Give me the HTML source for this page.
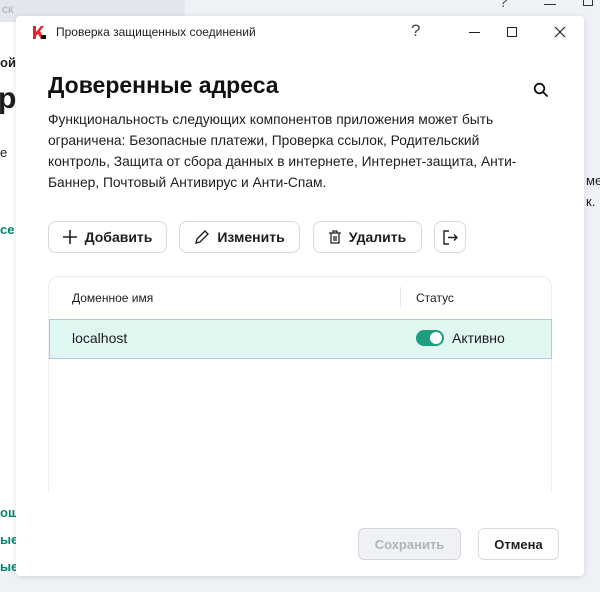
<!DOCTYPE html>
<html><head><meta charset="utf-8"><style>
*{box-sizing:border-box;margin:0;padding:0}
body{width:600px;height:592px;overflow:hidden;background:#eef1f5;font-family:"Liberation Sans","Noto Sans CJK JP",sans-serif;color:#1d1d1f;position:relative}
.abs{position:absolute;white-space:nowrap}
.dlg{position:absolute;left:16px;top:16px;width:568px;height:560px;background:#fff;border-radius:4px;box-shadow:0 1px 6px rgba(0,0,0,.12)}
.btn{position:absolute;top:205px;height:32px;border:1px solid #d6d9de;border-radius:8px;background:#fff;font-weight:bold;font-size:14px;display:flex;align-items:center;justify-content:center;gap:8px}
</style></head><body>
<div class="abs" style="left:0;top:0;width:185px;height:22px;background:#e3e7ed"></div>
<div class="abs" style="left:0;top:22px;width:16px;height:545px;background:#fff"></div>
<div class="abs" style="left:2px;top:2px;font-size:12px;color:#aab">ск</div>
<div class="abs" style="left:0;top:55px;font-size:13px;font-weight:bold">ой</div>
<div class="abs" style="left:-2px;top:82px;font-size:30px;font-weight:bold">р</div>
<div class="abs" style="left:0;top:145px;font-size:13px">е</div>
<div class="abs" style="left:0;top:222px;font-size:13px;color:#00866c;font-weight:bold">се</div>
<div class="abs" style="left:0;top:505px;font-size:13px;color:#00866c;font-weight:bold">ош</div>
<div class="abs" style="left:0;top:532px;font-size:13px;color:#00866c;font-weight:bold">ые</div>
<div class="abs" style="left:0;top:559px;font-size:13px;color:#00866c;font-weight:bold">ые</div>
<div class="abs" style="left:499px;top:-6px;font-size:16px;color:#555">?</div>
<div class="abs" style="left:544px;top:4px;width:12px;height:1px;background:#333"></div>
<div class="abs" style="left:583px;top:-4px;width:10px;height:10px;border:1px solid #333"></div>
<div class="abs" style="left:586px;top:173px;font-size:13px">ме</div>
<div class="abs" style="left:586px;top:194px;font-size:13px">к.</div>
<div class="dlg">
 <svg class="abs" style="left:16px;top:9px" width="15" height="15" viewBox="0 0 15 15"><path d="M1 1h3v6l5-6h3l-4 5 4 8H9L6 9 4 11v3H1z" fill="#e8232a"/><path d="M9 10l5 0 0 4-5 0z" fill="#111"/></svg>
 <div class="abs" style="left:40px;top:9px;font-size:12px">Проверка защищенных соединений</div>
 <div class="abs" style="left:395px;top:5px;font-size:17px;color:#444">?</div>
 <div class="abs" style="left:453px;top:16px;width:11px;height:1px;background:#222"></div>
 <div class="abs" style="left:491px;top:11px;width:10px;height:10px;border:1px solid #222"></div>
 <svg class="abs" style="left:538px;top:10px" width="12" height="12"><path d="M1 1L11 11M11 1L1 11" stroke="#222" stroke-width="1.2"/></svg>
 <div class="abs" style="left:32px;top:56px;font-size:23px;font-weight:bold;color:#111">Доверенные адреса</div>
 <svg class="abs" style="left:517px;top:66px" width="16" height="16"><circle cx="6.5" cy="6.5" r="4.8" fill="none" stroke="#111" stroke-width="1.8"/><path d="M10 10l4.5 4.5" stroke="#111" stroke-width="1.8"/></svg>
 <div class="abs" style="left:32px;top:93px;font-size:13.8px;line-height:21px;white-space:normal;width:478px">Функциональность следующих компонентов приложения может быть ограничена: Безопасные платежи, Проверка ссылок, Родительский контроль, Защита от сбора данных в интернете, Интернет-защита, Анти-Баннер, Почтовый Антивирус и Анти-Спам.</div>
 <div class="btn" style="left:32px;width:119px"><svg width="14" height="14"><path d="M7 0v14M0 7h14" stroke="#222" stroke-width="1.6"/></svg>Добавить</div>
 <div class="btn" style="left:163px;width:121px"><svg width="15" height="15"><path d="M2 13l1-4 8-8 3 3-8 8z" fill="none" stroke="#222" stroke-width="1.4"/></svg>Изменить</div>
 <div class="btn" style="left:297px;width:109px"><svg width="12" height="14"><path d="M0 3h12M4 3V1h4v2M2 3v10h8V3M5 6v5M7 6v5" fill="none" stroke="#222" stroke-width="1.3"/></svg>Удалить</div>
 <div class="btn" style="left:418px;width:32px"><svg width="15" height="15"><path d="M6 1H1v13h5M5 7.5h9M11 4.5l3 3-3 3" fill="none" stroke="#222" stroke-width="1.4"/></svg></div>
 <div class="abs" style="left:32px;top:260px;width:504px;height:216px;border:1px solid #eceef1;border-bottom:none;border-radius:10px 10px 0 0"></div>
 <div class="abs" style="left:56px;top:275px;font-size:12px">Доменное имя</div>
 <div class="abs" style="left:384px;top:271px;width:1px;height:20px;background:#e4e6ea"></div>
 <div class="abs" style="left:400px;top:275px;font-size:12px">Статус</div>
 <div class="abs" style="left:33px;top:303px;width:503px;height:40px;background:#dff6f1;border:1px solid #abc9ee"></div>
 <div class="abs" style="left:56px;top:314px;font-size:14px">localhost</div>
 <div class="abs" style="left:400px;top:314px;width:28px;height:16px;border-radius:8px;background:#1e9d81"></div>
 <div class="abs" style="left:414px;top:316px;width:12px;height:12px;border-radius:50%;background:#fff"></div>
 <div class="abs" style="left:436px;top:314px;font-size:14px">Активно</div>
 <div class="abs" style="left:342px;top:512px;width:103px;height:32px;border:1px solid #d3d6db;border-radius:6px;background:#eff1f4;color:#b0b4ba;font-weight:bold;font-size:13px;display:flex;align-items:center;justify-content:center">Сохранить</div>
 <div class="abs" style="left:462px;top:512px;width:81px;height:32px;border:1px solid #d6d9de;border-radius:6px;background:#fff;font-weight:bold;font-size:13px;display:flex;align-items:center;justify-content:center">Отмена</div>
</div>
</body></html>
